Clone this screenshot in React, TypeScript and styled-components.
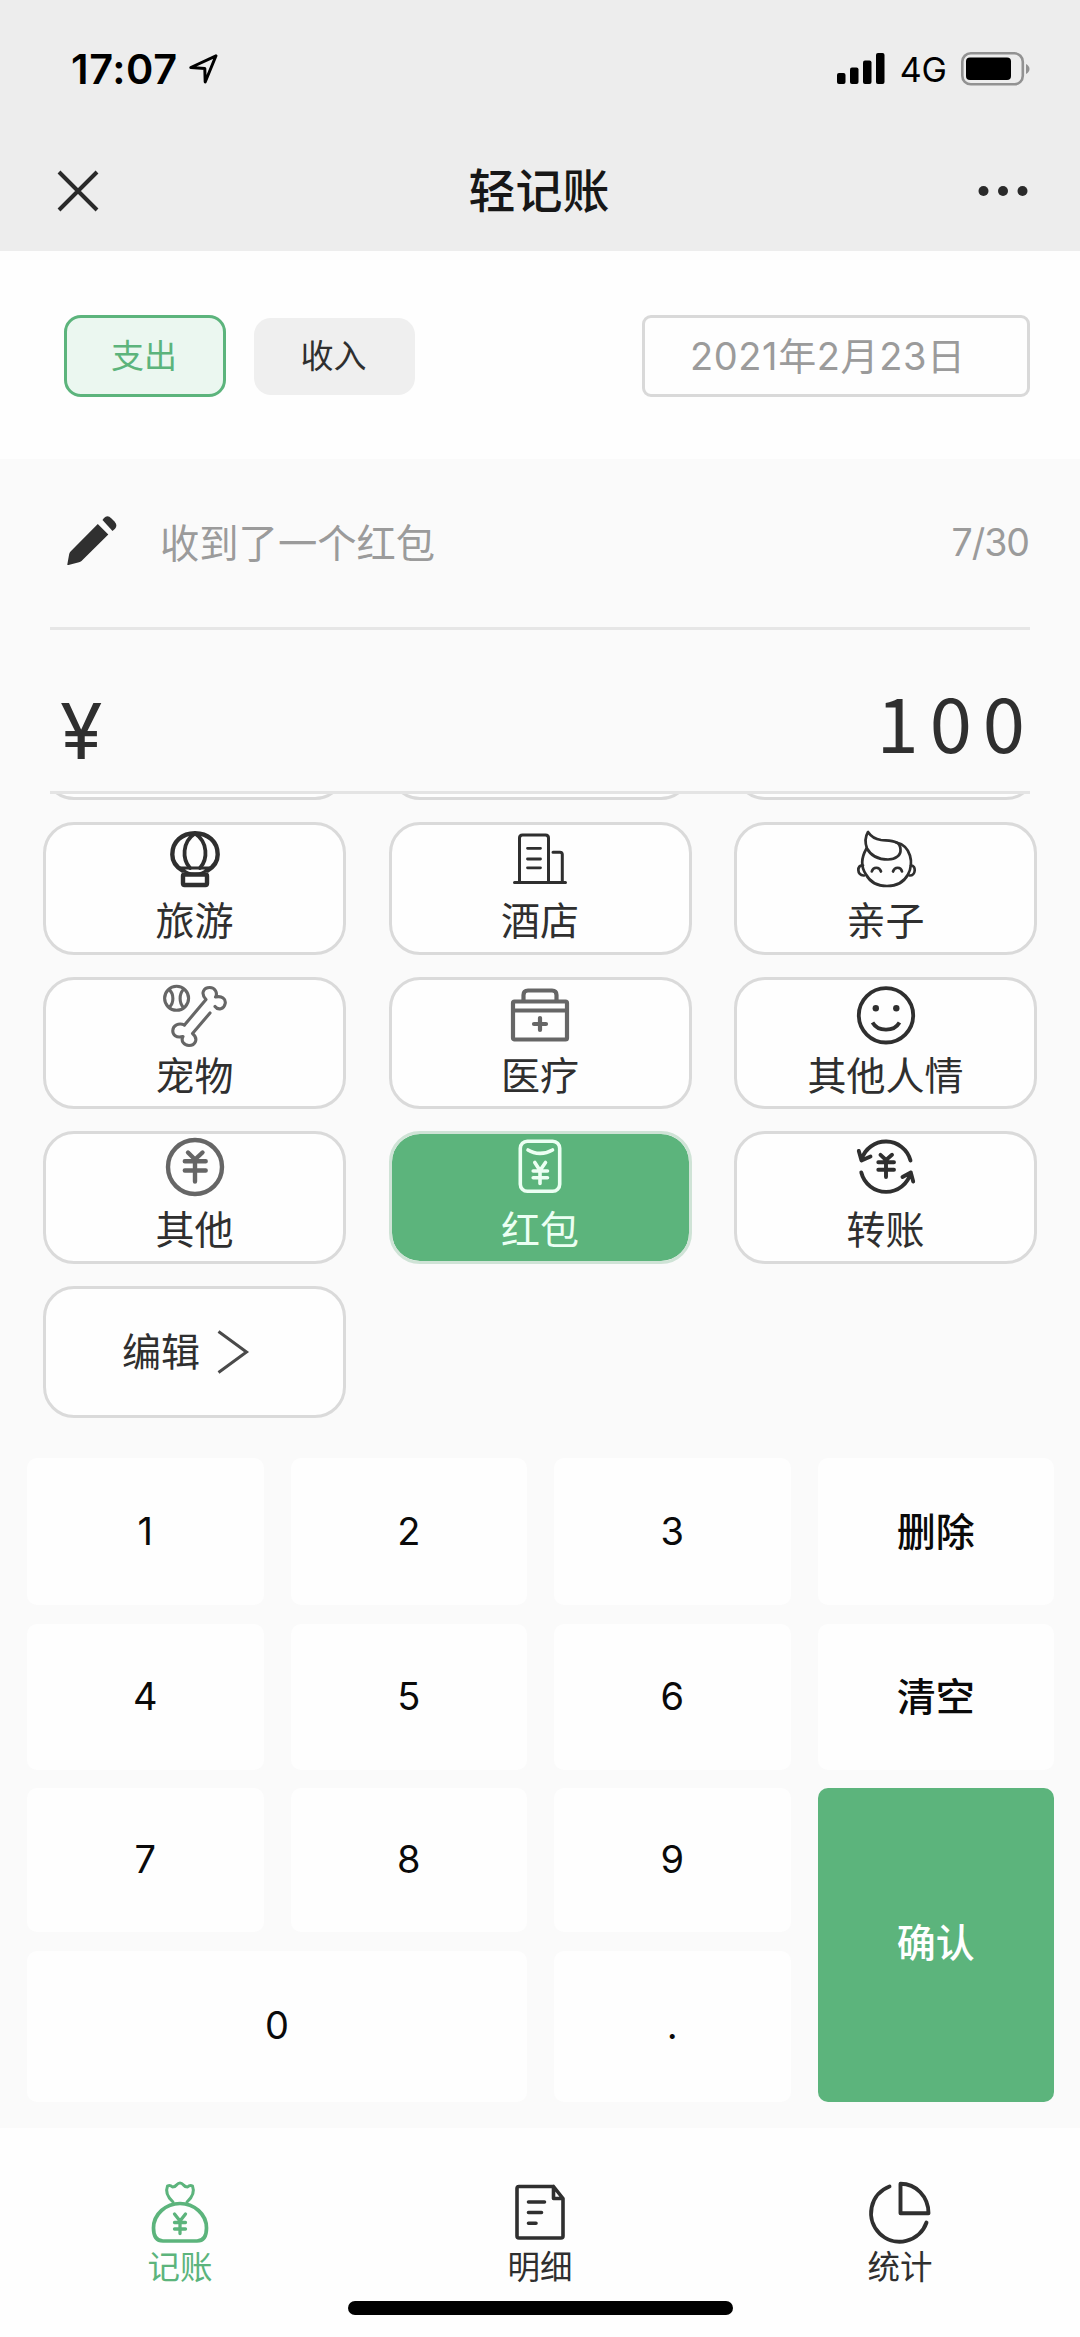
import React from 'react';
import styled, { createGlobalStyle, css } from 'styled-components';

const GREEN = '#5cb47c';
const INK = '#2f2f2f';
const MUTED = '#9b9b9b';

const GlobalStyle = createGlobalStyle`
  * { box-sizing: border-box; }
  body {
    margin: 0;
    background: #fefefe;
    font-family: Inter, 'Noto Sans CJK SC', sans-serif;
    color: ${INK};
  }
  svg { display: block; overflow: visible; flex: none; }
`;

const Screen = styled.div`
  width: 1080px;
  height: 2337px;
  display: flex;
  flex-direction: column;
  overflow: hidden;
`;

/* ---------- header ---------- */

const Header = styled.header`
  height: 251px;
  flex: none;
  background: #ededed;
`;

const StatusBar = styled.div`
  height: 138px;
  display: flex;
  justify-content: space-between;
  padding: 0 50px 0 71px;
  color: #000;
`;

const StatusGroup = styled.div`
  display: flex;
  align-items: center;
`;

const Time = styled.span`
  font-size: 41.5px;
  font-weight: 600;
  line-height: 50px;
  letter-spacing: 0.6px;
  margin-right: 11px;
`;

const Network = styled.span`
  font-size: 34px;
  line-height: 40px;
  margin: 2px 14px 0 15px;
`;

const NavBar = styled.div`
  height: 106px;
  display: grid;
  grid-template-columns: 200px 1fr 200px;
  align-items: center;
  padding: 0 52px 0 57px;
`;

const Title = styled.h1`
  margin: 0;
  text-align: center;
  font-size: 47px;
  font-weight: 500;
  line-height: 60px;
  color: #171717;
  padding-right: 7px;
`;

const NavEnd = styled.div`
  display: flex;
  justify-content: flex-end;
`;

/* ---------- type / date ---------- */

const FilterBar = styled.section`
  height: 208px;
  flex: none;
  display: flex;
  align-items: center;
  padding: 2px 50px 0 64px;
`;

const TypeButton = styled.button<{ $active?: boolean }>`
  width: 162px;
  height: 82px;
  padding: 0 2px 0 0;
  margin-right: 28px;
  border-radius: 17px;
  border: 3px solid ${GREEN};
  background: #ebf7f0;
  color: ${GREEN};
  font: 400 33px/40px Inter, 'Noto Sans CJK SC', sans-serif;
  ${({ $active }) =>
    !$active &&
    css`
      width: 161px;
      height: 77px;
      border: 0;
      background: #efefef;
      color: ${INK};
    `}
`;

const DateField = styled.div`
  width: 388px;
  height: 82px;
  margin-left: auto;
  padding-left: 45px;
  border: 3px solid #d9d9d9;
  border-radius: 9px;
  font-size: 38px;
  letter-spacing: 0.6px;
  line-height: 77px;
  color: ${MUTED};
  white-space: nowrap;
`;

/* ---------- form ---------- */

const Form = styled.main`
  height: 1669px;
  flex: none;
  display: flex;
  flex-direction: column;
  background: #fafafa;
`;

const NoteRow = styled.div`
  height: 171px;
  flex: none;
  margin: 0 50px;
  padding: 0 1px 4px 12px;
  display: flex;
  align-items: center;
  border-bottom: 3px solid #e6e6e6;
  line-height: 48px;
  color: ${MUTED};
`;

const Note = styled.span`
  flex: 1;
  margin-left: 38px;
  padding-top: 5px;
  font-size: 39.3px;
`;

const Counter = styled.span`
  padding-top: 4px;
  font-size: 37.5px;
  letter-spacing: -1px;
`;

const AmountRow = styled.div`
  height: 164px;
  flex: none;
  margin: 0 50px;
  padding: 0 0 0 10px;
  display: flex;
  justify-content: space-between;
  border-bottom: 3px solid #e4e4e4;
  font-size: 77px;
  line-height: 120px;
`;

const Currency = styled.span`
  padding-top: 41px;
  height: 160px;
`;

const Amount = styled.span`
  padding-top: 30px;
  height: 160px;
  letter-spacing: 11px;
  margin-right: -6px;
  font-family: 'Noto Sans CJK SC', sans-serif;
  font-size: 76px;
`;

const CategoryScroll = styled.div`
  height: 664px;
  flex: none;
  overflow: hidden;
  display: flex;
  flex-direction: column;
  justify-content: flex-end;
  padding: 0 43px 40px;
`;

const CategoryGrid = styled.div`
  display: grid;
  grid-template-columns: repeat(3, 303px);
  grid-auto-rows: 132.5px;
  column-gap: 42.5px;
  row-gap: 22px;
`;

const CategoryCard = styled.button<{ $selected?: boolean; $row?: boolean }>`
  display: flex;
  flex-direction: ${({ $row }) => ($row ? 'row' : 'column')};
  align-items: center;
  justify-content: ${({ $row }) => ($row ? 'center' : 'flex-start')};
  gap: ${({ $row }) => ($row ? '17px' : '11px')};
  padding: ${({ $row }) => ($row ? '0 18px 0 0' : '3px 0 0')};
  border: 3px solid ${({ $selected }) => ($selected ? '#cfe3d6' : '#dadada')};
  border-radius: 31px;
  background: ${({ $selected }) => ($selected ? GREEN : '#fefefe')};
  background-clip: padding-box;
  color: ${({ $selected }) => ($selected ? '#ecfff3' : INK)};
  font: 400 39px/44px Inter, 'Noto Sans CJK SC', sans-serif;
`;

/* ---------- keypad ---------- */

const Keypad = styled.div`
  display: grid;
  grid-template-columns: repeat(4, 236.5px);
  grid-template-rows: 147px 146px 144px 151px;
  gap: 18.5px 27px;
  padding: 0 0 0 27px;
`;

const Key = styled.button<{ $wide?: boolean; $tall?: boolean; $action?: boolean }>`
  padding: 0 0 2px;
  border: 0;
  border-radius: 10px;
  background: #fefefe;
  color: #0a0a0a;
  font: 400 38px/48px Inter, 'Noto Sans CJK SC', sans-serif;
  ${({ $wide }) => $wide && css`grid-column: span 2;`}
  ${({ $action }) => $action && css`padding: 0; font-size: 39px; font-weight: 500;`}
  ${({ $tall }) =>
    $tall &&
    css`
      grid-row: span 2;
      padding-bottom: 3px;
      background: ${GREEN};
      color: #fff;
    `}
`;

/* ---------- bottom tabs ---------- */

const TabBar = styled.nav`
  height: 172px;
  flex: none;
  display: grid;
  grid-template-columns: repeat(3, 1fr);
  padding-top: 54px;
`;

const Tab = styled.div<{ $active?: boolean }>`
  display: flex;
  flex-direction: column;
  align-items: center;
  gap: 6px;
  font-size: 32.5px;
  line-height: 40px;
  color: ${({ $active }) => ($active ? GREEN : INK)};
`;

const HomeIndicator = styled.div`
  width: 385px;
  height: 14px;
  flex: none;
  margin: 1px auto 0;
  border-radius: 7px;
  background: #000;
`;

/* ---------- icons ---------- */

type IconProps = { sw?: number; color?: string; children: React.ReactNode };

const Icon = ({ sw = 4, color = 'currentColor', children }: IconProps) => (
  <svg width="60" height="60" viewBox="0 0 60 60" fill="none" stroke={color} strokeWidth={sw} strokeLinecap="round" strokeLinejoin="round">
    {children}
  </svg>
);

const GRAY = '#666';

const BalloonIcon = () => (
  <Icon sw={4.4}>
    <path d="M17.500 42.500C10.500 38.500 7.300 33 7.300 26.500C7.300 13.500 17.300 5.200 30 5.200S52.700 13.500 52.700 26.500C52.700 33 49.500 38.500 42.500 42.500" />
    <path d="M30 5.500C17 14 17 31 25 40M30 5.500C43 14 43 31 35 40" strokeWidth="3.800" />
    <path d="M14.500 40H45.500" strokeWidth="3.200" />
    <path d="M18 41C22 48 38 48 42 41" strokeWidth="3.200" />
    <rect x="18" y="46.500" width="24" height="10.500" rx="1.500" />
  </Icon>
);

const HotelIcon = () => (
  <Icon sw={3}>
    <path d="M4.500 54.500H55.500M9.500 54V10Q9.500 7 12.500 7H35.500Q38.500 7 38.500 10V54M43 24.300H50Q52.300 24.300 52.300 26.600V54" />
    <path d="M17.500 20.300H30.500M17.500 31H30.500M17.500 39.800H30.500" strokeWidth="2.800" />
  </Icon>
);

const BabyIcon = () => (
  <Icon sw={2.7}>
    <path d="M12 4C9 9 9 15 11 20.500C15 28 23 31.500 32 31.500C40 31.500 45 27 44.500 21.500C44.300 18 43 15.500 40.500 14.500C36 12 31 12.600 25 12C19 11.200 15 8.500 12 4Z" />
    <path d="M10.500 20.500C4.500 31 5.500 40 10 46.500C14 54 22 58 31 58S48 54 52 46.500C58 35 55 18 40.500 14.500" />
    <path d="M7 37.500C.8 36 .5 48 8 47.500M54.800 37.500C60.500 37 60 48 53.500 47.500" />
    <path d="M15.800 43.500C17 38.500 23.500 38.500 25 43.500M37 43.500C38.500 38.500 45 38.500 46 43.500" />
  </Icon>
);

const PetIcon = () => (
  <Icon sw={3.100} color={GRAY}>
    <circle cx="11.600" cy="15.300" r="12" />
    <path d="M4.500 7C9 11 9 20 4.500 24M18.500 6.500C14 11 14 20 18.500 24.500" />
    <path d="M19.500 42L41 16.500C35 10 39 4.500 44.700 4.500C50 4.500 53 10 50.500 14C57 12.500 61 16 60.200 20.500C59 26.500 53 27.500 50 23.500" />
    <path d="M45 30L27.500 50.500C34 56 30 62.500 24 62.500C19 62.500 15.500 58 18 53.500C11 55.500 7.500 51.500 7.800 47.500C8 42.500 13.500 39.500 19.500 42" />
  </Icon>
);

const MedicalIcon = () => (
  <Icon sw={4.200} color={GRAY}>
    <rect x="3" y="18.500" width="54" height="38" rx="1.500" />
    <path d="M3 27.500H57M13.500 18V12Q13.500 7.500 18 7.500H42Q46.500 7.500 46.500 12V18" />
    <path d="M30 35V47M24 41H36" />
  </Icon>
);

const SmileIcon = () => (
  <Icon sw={3.800}>
    <circle cx="30" cy="32.300" r="27.200" />
    <circle cx="19.800" cy="25.300" r="3.200" fill="currentColor" stroke="none" />
    <circle cx="40.300" cy="25.300" r="3.200" fill="currentColor" stroke="none" />
    <path d="M16.500 39.500C22 49 38 49 43.500 39.500" strokeLinecap="butt" />
  </Icon>
);

const OtherIcon = () => (
  <Icon sw={4.400} color={GRAY}>
    <circle cx="30" cy="30" r="27" />
    <path d="M23 15.500L30 22.500L37.500 15.500M30 22.500V44.500M19.800 24.300H40.700M19.800 33.500H40.700" />
  </Icon>
);

const PacketIcon = () => (
  <Icon sw={3.600}>
    <rect x="10.300" y="4.300" width="39.400" height="50" rx="7" />
    <path d="M18 13C25 17.500 35 17.500 42.500 13M24.800 25.500L30 33.500L35.500 25.500M30 33.500V46.500M23.200 34H37.500M23.200 40.800H37.500" />
  </Icon>
);

const TransferIcon = () => (
  <Icon sw={3.900}>
    <path d="M5.500 22.500A25.500 25.500 0 0 1 54.500 23.500M2.800 14L5.500 23.500L14.500 19.500" />
    <path d="M5.300 35.500A25.500 25.500 0 0 0 54.800 35.500M57.200 44.500L54.800 35.500L46.500 40" />
    <path d="M24.500 17.800L30 23L36 17.800M30 23V40M22.300 25.300H38M22.300 32.800H38" />
  </Icon>
);

const ChevronIcon = () => (
  <svg width="32" height="44" viewBox="0 0 32 44" fill="none" stroke="#4a4a4a" strokeWidth="3">
    <path d="M1.500 1.500L29.500 22L1.500 42.500" />
  </svg>
);

const BagIcon = () => (
  <Icon sw={3.700}>
    <path d="M23 20C17.500 15 15.500 9 17.500 4Q20 2.500 22.500 5Q25 5 26.500 3Q30-1 33.500 3Q35 5 37.500 5Q40 2.500 42.500 4C44.500 9 42.500 15 37 20" strokeWidth="3" />
    <path d="M30 21.500C16 21.500 3.500 32 3.500 46Q3.500 59 13 59H47Q56.500 59 56.500 46C56.500 32 44 21.500 30 21.500Z" />
    <path d="M24.500 32L30 39L35.500 32M30 39V51.500M24.500 40.500H35.500M24.500 47H35.500" strokeWidth="3.300" />
  </Icon>
);

const DetailIcon = () => (
  <Icon sw={3.600}>
    <path d="M43.500 4.500H9Q7 4.500 7 6.500V54Q7 56 9 56H51Q53 56 53 54V16.500L43.500 4.500V16.500H53" />
    <path d="M18.500 20H34.500M18.500 30.500H31.500M18.500 41.300H26" />
  </Icon>
);

const ChartIcon = () => (
  <Icon sw={3.900}>
    <path d="M30.500 1.800V31.300H58.500C58.500 14.500 46 1.800 30.500 1.800Z" />
    <path d="M19.500 4.500A28.500 28.500 0 1 0 56.500 40.500" />
  </Icon>
);

const PencilIcon = () => (
  <svg width="60" height="60" viewBox="0 0 60 60" fill="#303030">
    <path d="M5.300 53.500L7.200 43Q7.600 41.500 8.800 40.300L35.800 13L46.300 23.500L19.500 50Q18.400 51 17 51.300L6.500 54Q5.200 54.300 5.300 53.500Z" />
    <path d="M40.500 9L42 7Q45.500 3.500 49.500 7.500L52.500 10.500Q56 14.500 53 17.800L50.500 20Z" />
  </svg>
);

const LocationIcon = () => (
  <svg width="29" height="30" viewBox="0 0 29 30" fill="none" stroke="#000" strokeWidth="3" strokeLinejoin="round">
    <path d="M27 1.800L1.800 13.500L15.800 14.500L16.200 28Z" />
  </svg>
);

const SignalIcon = () => (
  <svg width="48" height="32" viewBox="0 0 48 32">
    <rect x="0" y="20" width="8.500" height="11" rx="2" />
    <rect x="13" y="14.500" width="8.500" height="16.500" rx="2" />
    <rect x="26" y="7.500" width="8.500" height="23.500" rx="2" />
    <rect x="39" y="0" width="8.500" height="31" rx="2" />
  </svg>
);

const BatteryIcon = () => (
  <svg width="69" height="34" viewBox="0 0 69 34">
    <rect x="1.300" y="1.300" width="60.500" height="31" rx="8.500" fill="none" stroke="#929292" strokeWidth="2.600" />
    <rect x="5" y="5.500" width="45" height="22.500" rx="4" />
    <path d="M65 12Q68.500 14 68.500 17T65 22Z" fill="#929292" />
  </svg>
);

const CloseIcon = () => (
  <svg width="42" height="42" viewBox="0 0 42 42" stroke="#2a2a2a" strokeWidth="4">
    <path d="M2 2L40 40M40 2L2 40" />
  </svg>
);

const MoreIcon = () => (
  <svg width="50" height="12" viewBox="0 0 50 12" fill="#2a2a2a">
    <circle cx="5.500" cy="6" r="5" />
    <circle cx="25" cy="6" r="5" />
    <circle cx="44.500" cy="6" r="5" />
  </svg>
);

/* ---------- data ---------- */

const categories = [
  { label: '旅游', icon: <BalloonIcon /> },
  { label: '酒店', icon: <HotelIcon /> },
  { label: '亲子', icon: <BabyIcon /> },
  { label: '宠物', icon: <PetIcon /> },
  { label: '医疗', icon: <MedicalIcon /> },
  { label: '其他人情', icon: <SmileIcon /> },
  { label: '其他', icon: <OtherIcon /> },
  { label: '红包', icon: <PacketIcon />, selected: true },
  { label: '转账', icon: <TransferIcon /> },
];

const keys = [
  { label: '1' }, { label: '2' }, { label: '3' }, { label: '删除', action: true },
  { label: '4' }, { label: '5' }, { label: '6' }, { label: '清空', action: true },
  { label: '7' }, { label: '8' }, { label: '9' }, { label: '确认', action: true, tall: true },
  { label: '0', wide: true }, { label: '.' },
];

export default function App() {
  return (
    <Screen>
      <GlobalStyle />
      <Header>
        <StatusBar>
          <StatusGroup>
            <Time>17:07</Time>
            <LocationIcon />
          </StatusGroup>
          <StatusGroup>
            <SignalIcon />
            <Network>4G</Network>
            <BatteryIcon />
          </StatusGroup>
        </StatusBar>
        <NavBar>
          <CloseIcon />
          <Title>轻记账</Title>
          <NavEnd><MoreIcon /></NavEnd>
        </NavBar>
      </Header>

      <FilterBar>
        <TypeButton $active>支出</TypeButton>
        <TypeButton>收入</TypeButton>
        <DateField>2021年2月23日</DateField>
      </FilterBar>

      <Form>
        <NoteRow>
          <PencilIcon />
          <Note>收到了一个红包</Note>
          <Counter>7/30</Counter>
        </NoteRow>
        <AmountRow>
          <Currency>¥</Currency>
          <Amount>100</Amount>
        </AmountRow>
        <CategoryScroll>
          <CategoryGrid>
            <CategoryCard />
            <CategoryCard />
            <CategoryCard />
            {categories.map((c) => (
              <CategoryCard key={c.label} $selected={c.selected}>
                {c.icon}
                <span>{c.label}</span>
              </CategoryCard>
            ))}
            <CategoryCard $row>
              <span>编辑</span>
              <ChevronIcon />
            </CategoryCard>
          </CategoryGrid>
        </CategoryScroll>
        <Keypad>
          {keys.map((k) => (
            <Key key={k.label} $action={k.action} $tall={k.tall} $wide={k.wide}>
              {k.label}
            </Key>
          ))}
        </Keypad>
      </Form>

      <TabBar>
        <Tab $active><BagIcon />记账</Tab>
        <Tab><DetailIcon />明细</Tab>
        <Tab><ChartIcon />统计</Tab>
      </TabBar>
      <HomeIndicator />
    </Screen>
  );
}
